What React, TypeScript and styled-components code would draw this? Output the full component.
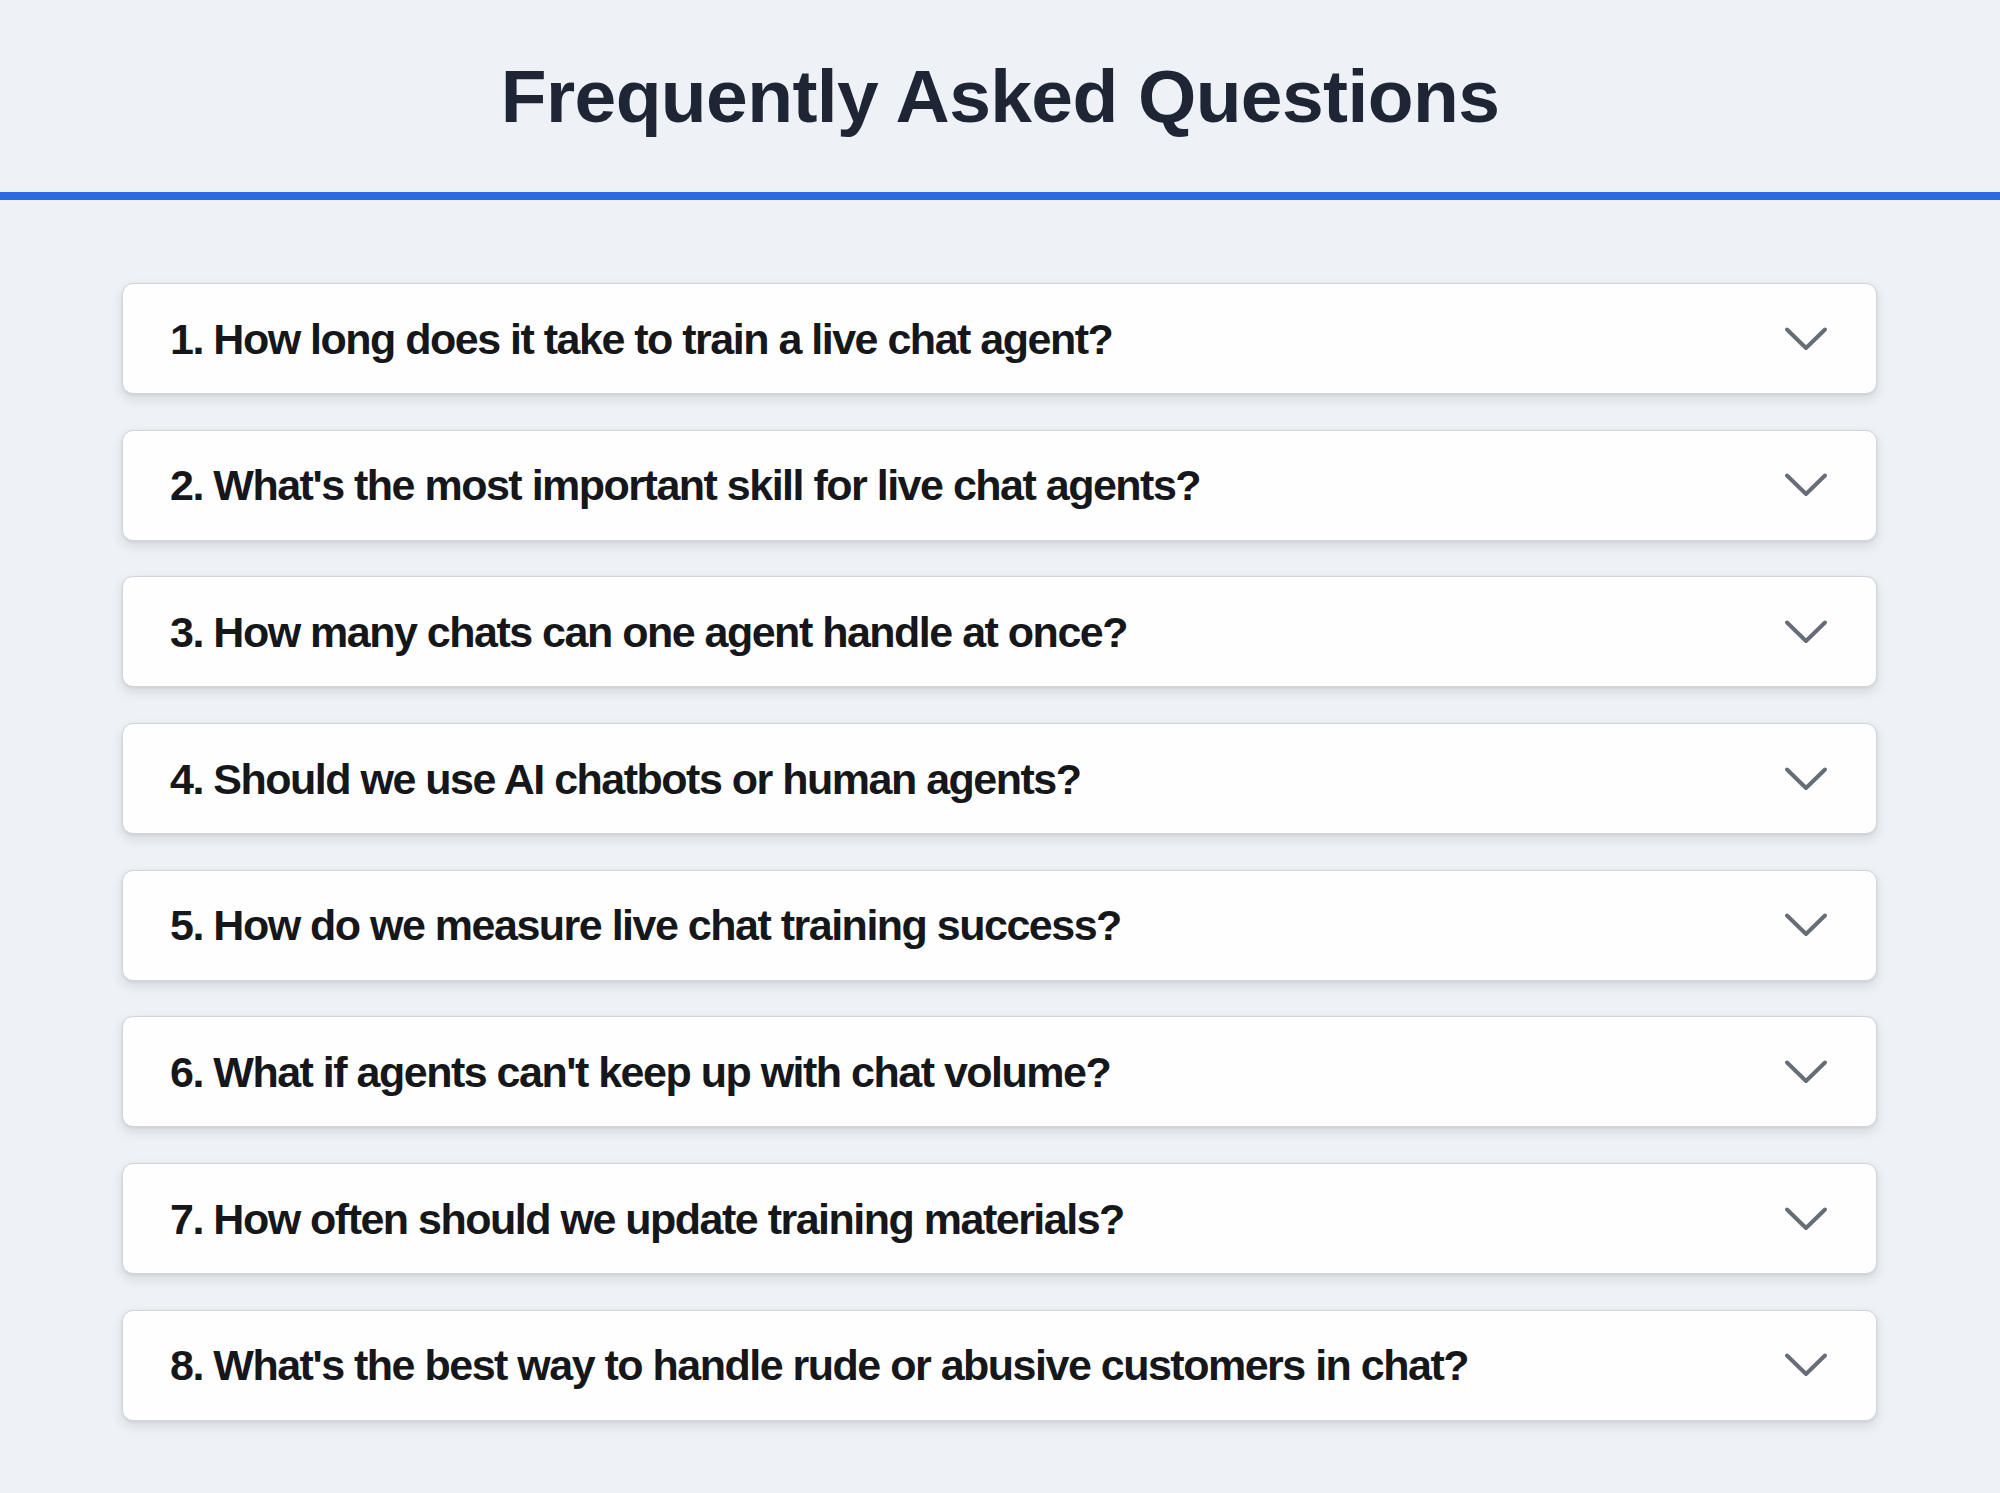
import React from 'react';
import styled, { createGlobalStyle } from 'styled-components';

const GlobalStyle = createGlobalStyle`
    html, body {
        margin: 0;
        padding: 0;
        background-color: #eef1f5;
    }
    body {
        font-family: 'Liberation Sans', Arial, sans-serif;
        -webkit-font-smoothing: antialiased;
    }
`;

const Page = styled.div`
    min-height: 1493px;
    background-color: #eef1f5;
`;

const Header = styled.header`
    padding: 51px 0 51px;
    border-bottom: 8px solid #2d6ae2;
    text-align: center;

    h1 {
        margin: 0;
        font-size: 75px;
        line-height: 90px;
        font-weight: 700;
        letter-spacing: -0.6px;
        color: #1e2636;
    }
`;

const List = styled.div`
    display: flex;
    flex-direction: column;
    gap: 35.7px;
    padding: 83px 123px 60px 122px;
`;

const Question = styled.div`
    display: flex;
    align-items: center;
    justify-content: space-between;
    height: 111px;
    box-sizing: border-box;
    padding: 0 48px 0 47px;
    background-color: #fefefe;
    border: 1.5px solid #d1d4da;
    border-radius: 11px;
    box-shadow: 0 5px 12px rgba(30, 40, 60, 0.12), 0 1px 3px rgba(30, 40, 60, 0.08);
    cursor: pointer;

    .label {
        font-size: 43px;
        line-height: 50px;
        font-weight: 700;
        letter-spacing: -1.5px;
        color: #15171b;
    }
`;

const Chevron = () => (
    <svg width="44" height="26" viewBox="0 0 44 26" fill="none">
        <polyline
            points="3,3.5 22,22 41,3.5"
            stroke="#676d78"
            strokeWidth="4"
            strokeLinecap="round"
            strokeLinejoin="round"
        />
    </svg>
);

const questions = [
    'How long does it take to train a live chat agent?',
    "What's the most important skill for live chat agents?",
    'How many chats can one agent handle at once?',
    'Should we use AI chatbots or human agents?',
    'How do we measure live chat training success?',
    "What if agents can't keep up with chat volume?",
    'How often should we update training materials?',
    "What's the best way to handle rude or abusive customers in chat?",
];

const App = () => {
    return (
        <>
            <GlobalStyle />
            <Page>
                <Header>
                    <h1>Frequently Asked Questions</h1>
                </Header>
                <List>
                    {questions.map((q, i) => (
                        <Question key={i}>
                            <span className="label">
                                {i + 1}. {q}
                            </span>
                            <Chevron />
                        </Question>
                    ))}
                </List>
            </Page>
        </>
    );
};

export default App;
